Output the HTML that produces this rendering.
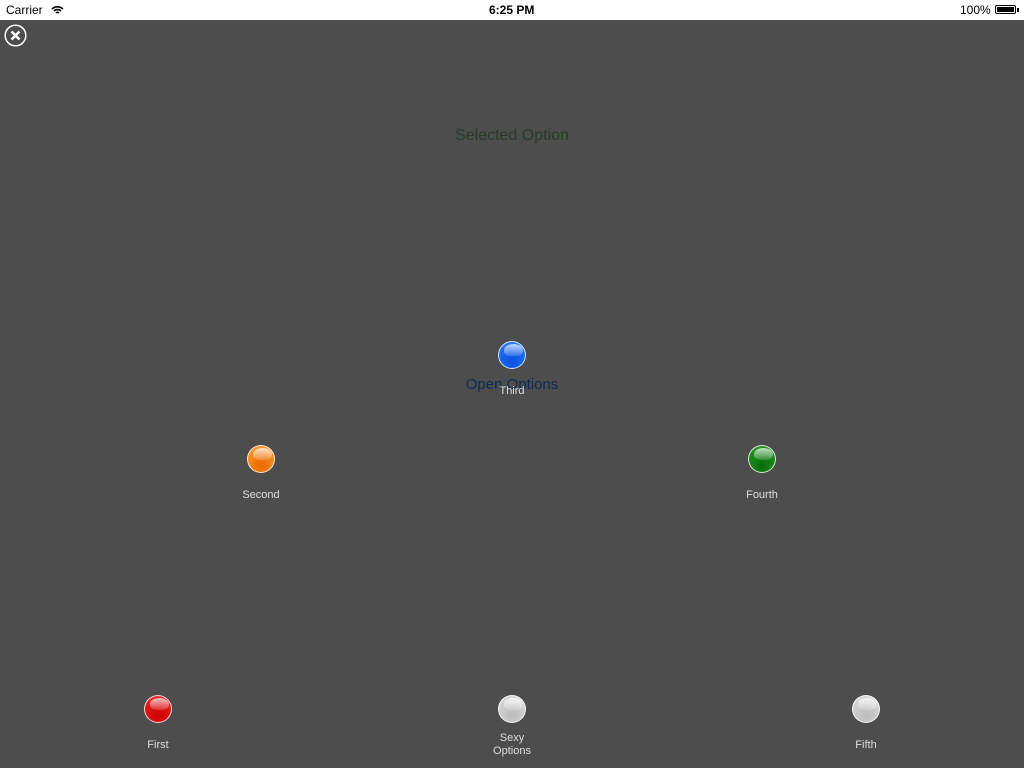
<!DOCTYPE html>
<html><head><style>
body{margin:0;width:1024px;height:768px;background:#4d4d4d;font-family:"Liberation Sans",sans-serif;position:relative;overflow:hidden}
.sb{position:absolute;top:0;left:0;width:1024px;height:20px;background:#fff;font-size:12px;color:#000}
.sb span{position:absolute;top:3px}
.ball{position:absolute;width:26px;height:26px;border-radius:50%;border:1px solid rgba(255,255,255,.8);box-sizing:content-box}
.ball::after{content:"";position:absolute;left:5px;top:2px;width:19px;height:12px;border-radius:50% 50% 40% 40%;background:linear-gradient(rgba(255,255,255,.7),rgba(255,255,255,.15))}
.lbl{position:absolute;width:100px;text-align:center;font-size:11px;color:#ddd;line-height:13px}
</style></head><body>
<div class="sb"><span style="left:6px">Carrier</span>
<svg style="position:absolute;left:51px;top:5px" width="13" height="10" viewBox="0 0 13 10"><path d="M1 4a8 8 0 0 1 11 0M3 6a5 5 0 0 1 7 0M5 8a2 2 0 0 1 3 0" stroke="#000" stroke-width="1.6" fill="none"/></svg>
<span style="left:489px;font-weight:bold">6:25 PM</span>
<span style="left:960px">100%</span>
<div style="position:absolute;left:995px;top:5px;width:21px;height:9px;border:1px solid #000;border-radius:2px;box-sizing:border-box;padding:1px"><div style="background:#000;height:100%"></div></div>
<div style="position:absolute;left:1017px;top:8px;width:2px;height:4px;background:#000"></div>
</div>
<svg style="position:absolute;left:4px;top:24px" width="23" height="23" viewBox="0 0 23 23"><circle cx="11.5" cy="11.5" r="10.3" fill="none" stroke="#fff" stroke-width="1.5"/><path d="M7.5 7.5l8 8M15.5 7.5l-8 8" stroke="#fff" stroke-width="2.6"/></svg>
<div style="position:absolute;left:412px;top:127px;width:200px;text-align:center;font-size:16px;color:#2a3a2a">Selected Option</div>
<div style="position:absolute;left:412px;top:376px;width:200px;text-align:center;font-size:15px;color:#0b2b55">Open Options</div>
<div class="ball" style="left:498px;top:341px;background:radial-gradient(circle at 50% 75%,#0a50e0,#1a6af0 60%,#3a8af8)"></div>
<div class="lbl" style="left:462px;top:385px">Third</div>
<div class="ball" style="left:247px;top:445px;background:radial-gradient(circle at 50% 75%,#e86a00,#f58a20 60%,#f8a040)"></div>
<div class="lbl" style="left:211px;top:489px">Second</div>
<div class="ball" style="left:748px;top:445px;background:radial-gradient(circle at 50% 75%,#0a6a0a,#1a8a1a 60%,#3aa03a)"></div>
<div class="lbl" style="left:712px;top:489px">Fourth</div>
<div class="ball" style="left:144px;top:695px;background:radial-gradient(circle at 50% 75%,#c00,#e01818 60%,#f04040)"></div>
<div class="lbl" style="left:108px;top:739px">First</div>
<div class="ball" style="left:498px;top:695px;background:radial-gradient(circle at 50% 75%,#bbb,#d0d0d0 60%,#e0e0e0)"></div>
<div class="lbl" style="left:462px;top:732px">Sexy<br>Options</div>
<div class="ball" style="left:852px;top:695px;background:radial-gradient(circle at 50% 75%,#bbb,#d0d0d0 60%,#e0e0e0)"></div>
<div class="lbl" style="left:816px;top:739px">Fifth</div>
</body></html>
